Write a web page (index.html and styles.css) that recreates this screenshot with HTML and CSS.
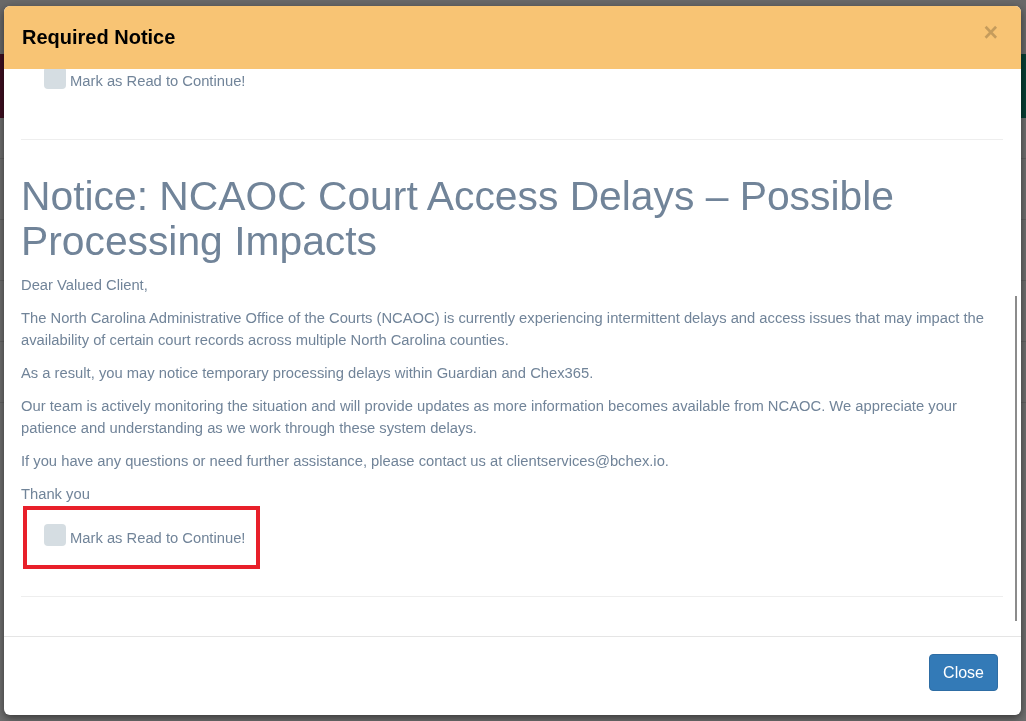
FILE: index.html
```html
<!doctype html>
<html lang="en">
<head>
    <meta charset="UTF-8">
    <title>Required Notice</title>
    <link rel="stylesheet" href="styles.css">
</head>
<body>
    <!-- Page behind the modal, mostly hidden by the backdrop -->
    <div class="page">
        <div class="page-top"></div>
        <div class="page-band"></div>
        <div class="page-main">
            <div class="page-line"></div>
            <div class="page-line"></div>
            <div class="page-line"></div>
            <div class="page-line"></div>
            <div class="page-line"></div>
        </div>
    </div>

    <div class="backdrop"></div>

    <div class="modal" role="dialog">
        <div class="modal-header">
            <h4 class="modal-title">Required Notice</h4>
            <button class="close" type="button">&times;</button>
        </div>

        <div class="modal-body">
            <div class="notice-list">
                <div class="notice">
                    <div class="mark-wrap">
                        <label class="mark"><span class="mark-box"></span><span class="mark-text">Mark as Read to Continue!</span></label>
                    </div>
                    <hr>
                </div>

                <div class="notice">
                    <h1 class="notice-title">Notice: NCAOC Court Access Delays &ndash; Possible Processing Impacts</h1>
                    <p>Dear Valued Client,</p>
                    <p>The North Carolina Administrative Office of the Courts (NCAOC) is currently experiencing intermittent delays and access issues that may impact the availability of certain court records across multiple North Carolina counties.</p>
                    <p>As a result, you may notice temporary processing delays within Guardian and Chex365.</p>
                    <p>Our team is actively monitoring the situation and will provide updates as more information becomes available from NCAOC. We appreciate your patience and understanding as we work through these system delays.</p>
                    <p>If you have any questions or need further assistance, please contact us at clientservices@bchex.io.</p>
                    <p class="sign-off">Thank you</p>
                    <div class="mark-wrap is-flagged">
                        <label class="mark"><span class="mark-box"></span><span class="mark-text">Mark as Read to Continue!</span></label>
                    </div>
                    <hr>
                </div>
            </div>

            <div class="scrollbar"></div>
        </div>

        <div class="modal-footer">
            <button class="btn" type="button">Close</button>
        </div>
    </div>
</body>
</html>
```

FILE: styles.css
```css
body {
    margin: 0;
    font-family: 'Liberation Sans', Arial, sans-serif;
    background-color: #f4f4f4;
}

.page-top {
    height: 54px;
    background-color: #e6e6e6;
}

.page-band {
    height: 64px;
    background: linear-gradient(to right, #8a2148 0%, #5a3a5e 50%, #0f8a72 100%);
}

.page-main {
    padding-top: 40px;
}

.page-line {
    height: 1px;
    margin-bottom: 60px;
    background-color: #d8d8d8;
}

.backdrop {
    position: fixed;
    top: 0;
    left: 0;
    right: 0;
    bottom: 0;
    background-color: rgba(0, 0, 0, 0.55);
}

.modal {
    position: fixed;
    top: 6px;
    left: 4px;
    width: 1017px;
    height: 709px;
    display: flex;
    flex-direction: column;
    background-color: #fff;
    border-radius: 6px;
    overflow: hidden;
    box-shadow: 0 3px 9px rgba(0, 0, 0, 0.5);
}

.modal-header {
    height: 63px;
    flex-shrink: 0;
    display: flex;
    align-items: center;
    justify-content: space-between;
    padding: 0 23px 0 18px;
    background-color: #f8c474;
}

.modal-title {
    margin: 0;
    font-size: 20px;
    font-weight: bold;
    color: #000;
}

.close {
    margin-top: -11px;
    padding: 0;
    border: none;
    background: none;
    font-family: 'Liberation Sans', Arial, sans-serif;
    font-size: 25px;
    font-weight: bold;
    line-height: 1;
    color: #000;
    opacity: 0.2;
}

.modal-body {
    position: relative;
    height: 567px;
    flex-shrink: 0;
    overflow: hidden;
    padding: 0 18px 0 17px;
}

.notice-list {
    margin-top: -20px;
}

hr {
    margin: 27px 0 0;
    border: 0;
    border-top: 1px solid #eee;
}

.notice-title {
    margin: 34px 0 10px;
    font-size: 40.8px;
    font-weight: normal;
    line-height: 45px;
    color: #718499;
}

.notice p {
    margin: 0 0 11px;
    font-size: 14.75px;
    line-height: 22px;
    color: #718499;
}

.notice p.sign-off {
    margin-bottom: 1px;
}

.mark-wrap {
    width: 237px;
    height: 63px;
    box-sizing: border-box;
    margin-left: 2px;
    padding: 14px 0 0 17px;
    border: 4px solid transparent;
}

.mark-wrap.is-flagged {
    border-color: #e8202a;
}

.mark {
    display: flex;
    align-items: flex-start;
    gap: 4px;
    font-size: 14.75px;
    line-height: 22px;
    color: #718499;
}

.mark-box {
    width: 22px;
    height: 22px;
    flex-shrink: 0;
    border-radius: 4px;
    background-color: #d5dde2;
}

.mark-text {
    margin-top: 3px;
}

.scrollbar {
    position: absolute;
    top: 227px;
    right: 4px;
    width: 2px;
    height: 325px;
    background-color: #8c8c8c;
}

.modal-footer {
    flex-grow: 1;
    display: flex;
    justify-content: flex-end;
    align-items: flex-start;
    padding: 17px 23px 0 0;
    border-top: 1px solid #e5e5e5;
}

.btn {
    padding: 8px 13px;
    font-family: 'Liberation Sans', Arial, sans-serif;
    font-size: 16px;
    line-height: 19px;
    color: #fff;
    background-color: #337ab7;
    border: 1px solid #2e6da4;
    border-radius: 4px;
}
```
